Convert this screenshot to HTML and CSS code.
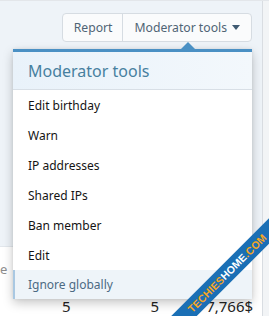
FILE: index.html
```html
<!DOCTYPE html>
<html>
<head>
<meta charset="utf-8">
<link rel="stylesheet" href="styles.css">
</head>
<body>
<div class="page">
  <div class="block">
    <div class="header-area">
      <div class="actions">
        <div class="btn-group">
          <span class="btn">Report</span>
          <span class="btn">Moderator tools <span class="caret"></span></span>
        </div>
      </div>
    </div>
    <div class="stats">
      <div class="labels"><span class="lbl">e</span></div>
      <div class="values"><span class="v1">5</span><span class="v2">5</span><span class="v3">7,766$</span></div>
    </div>
  </div>
</div>

<div class="menu">
  <div class="menu-arrow"></div>
  <div class="menu-header">Moderator tools</div>
  <div class="menu-item">Edit birthday</div>
  <div class="menu-item">Warn</div>
  <div class="menu-item">IP addresses</div>
  <div class="menu-item">Shared IPs</div>
  <div class="menu-item">Ban member</div>
  <div class="menu-item">Edit</div>
  <div class="menu-item is-hover">Ignore globally</div>
</div>

<div class="ribbon"><span class="y">TECHIES</span><span class="w">HOME</span><span class="y">.COM</span></div>
</body>
</html>
```
FILE: styles.css
```css
html, body {
  margin: 0;
  padding: 0;
}
body {
  width: 269px;
  height: 316px;
  overflow: hidden;
  position: relative;
  background: #f2f4f6;
  font-family: "Noto Sans", "Open Sans", sans-serif;
  color: #141414;
}
.page {
  display: flex;
  height: 316px;
  border-top: 1px solid #e3e6ea;
  box-sizing: border-box;
}
.block {
  width: 262px;
  border-right: 1px solid #d9dde2;
  display: flex;
  flex-direction: column;
  background: #fff;
}
.header-area {
  height: 258px;
  background: #eef3f8;
  border-bottom: 1px solid #e2e7ec;
  box-sizing: border-box;
}
.actions {
  display: flex;
  justify-content: flex-end;
  padding: 12px 10px 0 0;
}
.btn-group {
  display: flex;
  height: 29px;
  border: 1px solid #d6dce2;
  border-radius: 4px;
  background: #fafbfc;
  box-sizing: border-box;
}
.btn {
  display: flex;
  align-items: center;
  padding: 0 10px 0 11px;
  font-size: 12.2px;
  color: #4f6475;
}
.btn + .btn {
  border-left: 1px solid #d6dce2;
  padding: 0 11px 0 11px;
}
.caret {
  display: inline-block;
  width: 0;
  height: 0;
  margin-left: 5px;
  border-left: 4.5px solid transparent;
  border-right: 4.5px solid transparent;
  border-top: 5px solid #3f5a72;
}
.stats {
  flex: 1;
  padding-top: 14px;
}
.labels {
  height: 35px;
  font-size: 13px;
  color: #8c8c8c;
  line-height: 16px;
}
.lbl {
  display: inline-block;
}
.values {
  display: flex;
  font-size: 15px;
  color: #222;
  line-height: 20px;
}
.v1 { margin-left: 62px; }
.v2 { margin-left: 80px; }
.v3 { margin-left: 47px; }

.menu {
  position: absolute;
  left: 13px;
  top: 49px;
  width: 239px;
  height: 250px;
  background: #fff;
  border-top: 3px solid #4a90c4;
  box-sizing: border-box;
  box-shadow: 0 4px 10px rgba(0,0,0,0.22), 0 0 3px rgba(0,0,0,0.08);
}
.menu-arrow {
  position: absolute;
  top: -10px;
  left: 167px;
  width: 0;
  height: 0;
  border-left: 8px solid transparent;
  border-right: 8px solid transparent;
  border-bottom: 8px solid #4a90c4;
}
.menu-header {
  height: 37px;
  display: flex;
  align-items: center;
  padding-left: 15px;
  font-size: 16px;
  color: #47809f;
  background: linear-gradient(90deg, #e9f2fa, #f3f8fc);
  border-bottom: 1px solid #d8dfe6;
}
.menu-item {
  height: 30px;
  display: flex;
  align-items: center;
  padding-left: 15px;
  font-size: 12px;
  color: #141414;
}
.menu-item.is-hover {
  height: 29px;
  background: #eef4f9;
  color: #4c6a83;
  border-left: 2px solid #a9c8e2;
  padding-left: 13px;
}
.ribbon {
  position: absolute;
  left: 132px;
  top: 264px;
  width: 190px;
  height: 18px;
  background: #1a6fb5;
  transform: rotate(-45deg);
  display: flex;
  align-items: center;
  justify-content: center;
  font-family: "Liberation Sans", sans-serif;
  font-weight: bold;
  font-size: 10.5px;
  letter-spacing: 0.1px;
}
.ribbon .y { color: #f6a623; }
.ribbon .w { color: #fff; }
```
